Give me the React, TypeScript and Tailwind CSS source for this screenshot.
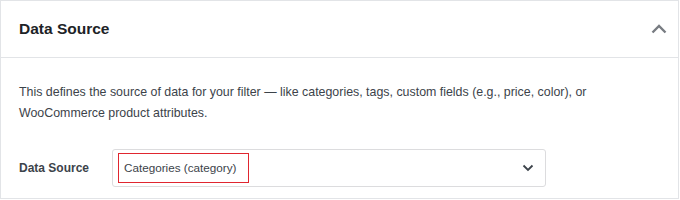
import React from "react";

export default function App() {
  return (
    <div className="w-[680px] h-[200px] bg-white overflow-hidden" style={{ fontFamily: '"Liberation Sans", Arial, sans-serif' }}>
      <div className="w-[679px] border border-[#e2e4e7] bg-white">
        <div className="h-[57px] flex items-center justify-between pl-[18px] pr-[11px] border-b border-[#e2e4e7]">
          <h2 className="text-[15.5px] font-bold text-[#1d2327] leading-none">Data Source</h2>
          <svg width="16" height="10" viewBox="0 0 16 10" className="text-[#787c82]">
            <path d="M1.5 8.5 L8 2 L14.5 8.5" fill="none" stroke="currentColor" strokeWidth="2.4" />
          </svg>
        </div>
        <div className="pl-[18px] pr-[18px] pt-[24px] pb-[11px]">
          <p className="text-[12.4px] leading-[21px] text-[#3c434a] max-w-[600px]">
            This defines the source of data for your filter — like categories, tags, custom fields (e.g., price, color), or WooCommerce product attributes.
          </p>
          <div className="flex items-center mt-[25px]">
            <div className="w-[93px] shrink-0 text-[12px] font-bold text-[#3c434a]">Data Source</div>
            <div className="w-[434px] h-[38px] shrink-0 border border-[#dcdcde] rounded-[3px] flex items-center justify-between pl-[5px] pr-[11px]">
              <div className="h-[30px] w-[131px] shrink-0 whitespace-nowrap border border-[#e0262f] flex items-center pl-[5px] text-[11.7px] text-[#3c434a]">
                Categories (category)
              </div>
              <svg width="12" height="8" viewBox="0 0 12 8" className="text-[#3c434a]">
                <path d="M1.5 1.5 L6 6 L10.5 1.5" fill="none" stroke="currentColor" strokeWidth="1.8" />
              </svg>
            </div>
          </div>
        </div>
      </div>
    </div>
  );
}
